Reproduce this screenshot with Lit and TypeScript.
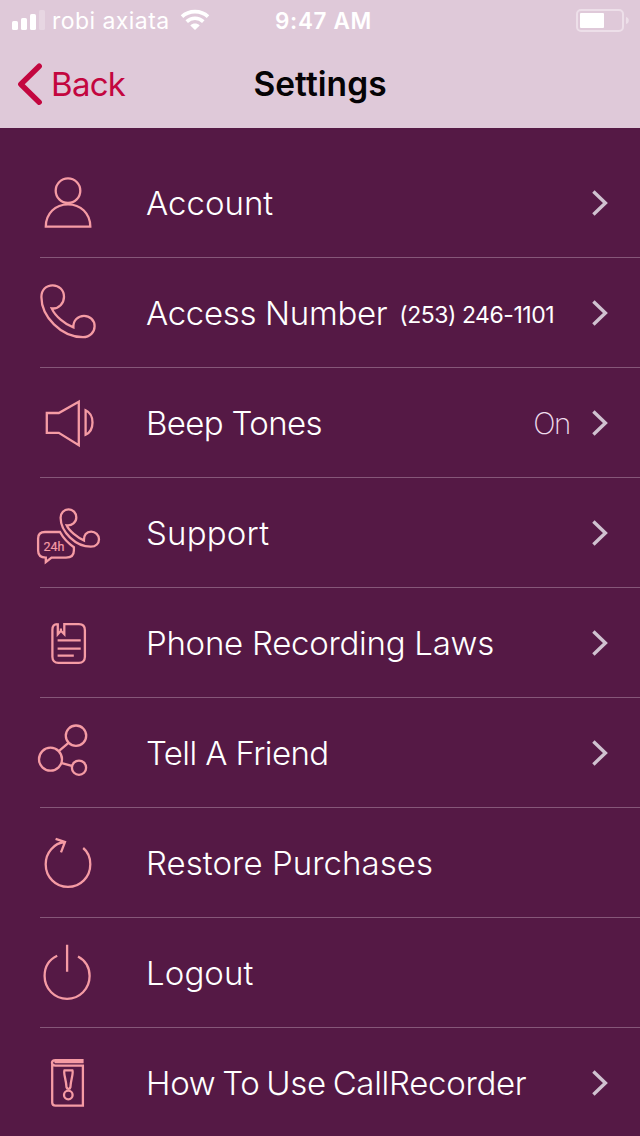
import { LitElement, html, css, svg, nothing } from "lit";
import { customElement, property } from "lit/decorators.js";

const icons: Record<string, unknown> = {
  account: svg`<circle cx="48" cy="30.7" r="12.3"/><path d="M25.8 66.6C25.8 53.5 35.5 44.3 48 44.3S70.3 53.5 70.3 66.6Z"/>`,
  phone: svg`<path d="M31.7 38.4C39 39.2 44 33 44 26.8C44 20 39 15.3 32.7 15.3C26 15.3 21.4 20 21.4 27C21.4 46.5 41 67.2 63 67.2C70 67.2 74.6 62 74.6 56.3C74.6 50 69.5 45.8 64 45.8C58 45.8 53 50.5 53.4 57.4C45 54.5 35 46 31.7 38.4Z"/>`,
  speaker: svg`<path d="M26.8 33H38.8L58.8 21.8V65.3L38.8 52.8H26.8ZM65.6 30.2V54.8C74.8 50.5 74.8 34.5 65.6 30.2Z"/>`,
  support: svg`<path d="M46.7 35.3C52 36 56.3 32.2 56.3 27.6C56.3 22.6 52.8 19.4 48.6 19.4C44 19.4 40.6 22.8 40.6 27.8C40.6 42 56 56.7 70.8 56.7C76 56.7 79 53.3 79 49.3C79 45 75.5 41.6 71.2 41.6C66.5 41.6 63.6 45.2 63.9 50.4C57.5 47.5 49 41 46.7 35.3Z"/><path d="M40 42H25C20.5 42 18.1 44.5 18.1 48.5V60.5C18.1 65 20.8 67.6 25.8 67.6V72.2L31.5 67.6H46C51 67.6 53.9 65 53.9 60.5V57.2C48.5 53.5 43.5 48.5 40 42Z"/><text class="hours" x="23.5" y="60.8" textLength="21" lengthAdjust="spacingAndGlyphs">24h</text>`,
  laws: svg`<path d="M37.3 24.2C34.2 24.2 32.4 26.4 32.4 29.8V56.8C32.4 60.5 34.7 62.9 38.3 62.9H58.9C62.5 62.9 64.9 60.5 64.9 56.8V30.2C64.9 26.4 62.5 24.2 58.9 24.2H44.3V34.2L40.9 30.8L37.8 34.2V23.2M40.9 28.6V31.5M37.6 40.3H60.7M37.6 48.7H60.7M37.6 55.6H53.8"/>`,
  share: svg`<circle cx="56" cy="25.7" r="10.2"/><circle cx="30.5" cy="49.2" r="11.5"/><circle cx="59" cy="57.7" r="7.1"/><path d="M48.5 32.8L38.8 41.2M41.8 53.1L51.8 55.8"/>`,
  restore: svg`<path d="M63.2 28C68 32 70.3 38 70.3 44.2C70.3 57 60.5 66.9 48 66.9S25.7 57 25.7 44.2C25.7 32.5 34 23.2 44.8 22M35.6 18.8L45 22L41 32.3"/>`,
  power: svg`<path d="M37.2 25.8C29 29.7 24.6 37.2 24.6 46C24.6 58.9 34.7 68.8 47.1 68.8S69.6 58.9 69.6 46C69.6 37.6 65.2 30.3 58 26.4M47.1 14.7V41.7"/>`,
  guide: svg`<g transform="translate(0 -4)"><path d="M63.6 28.1H35.5C30.8 28.1 30.8 33.6 35.5 33.6H62.9V73.6H35.5C33.4 73.6 32.2 72.4 32.2 70.5V31M34.5 30H63.6M44.5 38.4H52.4C53.8 41 50.8 47 50.4 55.2C50 57.4 46.9 57.4 46.5 55.2C46.1 47 43.1 41 44.5 38.4Z" transform="translate(0 -4)"/><circle cx="48.3" cy="59" r="4.3"/></g>`,
};

interface Item {
  icon: string;
  label: string;
  key: string;
  number?: string;
  value?: string;
  chevron: boolean;
}

const items: Item[] = [
  { icon: "account", label: "Account", key: "account", chevron: true },
  { icon: "phone", label: "Access Number", key: "access", number: "(253) 246-1101", chevron: true },
  { icon: "speaker", label: "Beep Tones", key: "beep", value: "On", chevron: true },
  { icon: "support", label: "Support", key: "support", chevron: true },
  { icon: "laws", label: "Phone Recording Laws", key: "laws", chevron: true },
  { icon: "share", label: "Tell A Friend", key: "tell", chevron: true },
  { icon: "restore", label: "Restore Purchases", key: "restore", chevron: false },
  { icon: "power", label: "Logout", key: "logout", chevron: false },
  { icon: "guide", label: "How To Use CallRecorder", key: "guide", chevron: true },
];

@customElement("settings-row")
export class SettingsRow extends LitElement {
  @property({ attribute: false }) item!: Item;

  static styles = css`
    :host { display: block; height: 110px; flex: none; }
    .row { display: flex; align-items: center; height: 110px; padding-left: 20px; box-sizing: border-box;
      background: linear-gradient(#865779, #865779) 40px 109px / 600px 1px no-repeat; }
    .icon { flex: none; width: 100px; height: 110px; fill: none; stroke: #f59ba4; stroke-width: 2.3; }
    .hours { font: 13.5px Roboto, sans-serif; fill: #f59ba4; stroke: #f59ba4; stroke-width: 0.2; }
    .label { margin-left: 26px; font-size: 33px; font-weight: 300; line-height: 40px; color: #fff; white-space: nowrap; letter-spacing: 0; }
    .access { letter-spacing: -0.33px; }
    .beep { letter-spacing: -0.65px; }
    .support { letter-spacing: 0.2px; }
    .laws { letter-spacing: -0.27px; }
    .tell { letter-spacing: -0.6px; }
    .restore { letter-spacing: 0.05px; }
    .logout { letter-spacing: 0.1px; }
    .guide { letter-spacing: -0.3px; word-spacing: -2.2px; }
    .number { margin-left: 12px; padding-top: 3px; font-size: 23px; line-height: 30px; color: #fff; white-space: nowrap; letter-spacing: -0.47px; }
    .spacer { flex: 1; }
    .value { font-size: 29.5px; font-weight: 200; line-height: 40px; color: #efdced; margin-right: 21px; letter-spacing: -1.4px; }
    .chevron { flex: none; width: 18px; height: 28px; margin-right: 31px; fill: none; stroke: #d0c2d0; stroke-width: 3.4; }
  `;

  render() {
    const i = this.item;
    return html`<div class="row">
      <svg class="icon" viewBox="0 -12 100 110">${icons[i.icon]}</svg>
      <span class="label ${i.key}">${i.label}</span>
      ${i.number ? html`<span class="number">${i.number}</span>` : nothing}
      <span class="spacer"></span>
      ${i.value ? html`<span class="value">${i.value}</span>` : nothing}
      ${i.chevron ? html`<svg class="chevron" viewBox="0 0 18 28"><path d="M2.4 2.6L14.4 14L2.4 25.4"/></svg>` : nothing}
    </div>`;
  }
}

@customElement("app-root")
export class AppRoot extends LitElement {
  static styles = css`
    :host { display: block; height: 1136px; overflow: hidden; background: #551945; font-family: Inter, "Liberation Sans", sans-serif; }
    .header { height: 128px; background: #dfc9d9; }
    .status { display: grid; grid-template-columns: 1fr auto 1fr; align-items: center; height: 40px; color: #fff; }
    .carrier { display: flex; align-items: center; padding-left: 11px; }
    .signal { width: 34px; height: 22px; margin-right: 7px; fill: #fff; }
    .name { font-size: 23px; line-height: 38px; padding-top: 2px; letter-spacing: 0.45px; }
    .wifi { width: 30px; height: 22px; margin-left: 10px; }
    .time { font-size: 22.5px; font-weight: 600; letter-spacing: 0.65px; padding-left: 7px; }
    .battery { justify-self: end; width: 54px; height: 24px; margin-right: 10px; }
    .nav { display: grid; grid-template-columns: 1fr auto 1fr; align-items: center; height: 88px; }
    .back { display: flex; align-items: center; padding-left: 16px; font-size: 33px; color: #c3063f; letter-spacing: -0.7px; }
    .arrow { width: 27px; height: 44px; margin-right: 8px; fill: none; stroke: #c3063f; stroke-width: 5.4; stroke-linecap: round; stroke-linejoin: round; }
    .title { font-size: 33.5px; font-weight: 600; color: #050305; letter-spacing: 0.05px; }
    .list { display: flex; flex-direction: column; padding-top: 20px; }
  `;

  render() {
    return html`
      <div class="header">
        <div class="status">
          <div class="carrier">
            <svg class="signal" viewBox="0 0 34 22"><rect x="1" y="12" width="6" height="9" rx="1.6"/><rect x="10" y="9" width="6" height="12" rx="1.6"/><rect x="19" y="5" width="6" height="16" rx="1.6"/><rect x="28" y="1" width="6" height="20" rx="1.6" opacity=".25"/></svg>
            <span class="name">robi axiata</span>
            <svg class="wifi" viewBox="0 0 30 22" fill="none" stroke="#fff" stroke-width="3.6"><path d="M2 7.6C9 .9 21 .9 28 7.6M6.7 12.6C11.3 8.2 18.7 8.2 23.3 12.6"/><path d="M10.3 16.4C13 14 17 14 19.7 16.4L15 21Z" fill="#fff" stroke="none"/></svg>
          </div>
          <span class="time">9:47 AM</span>
          <svg class="battery" viewBox="0 0 54 24"><rect x="1" y="2" width="46" height="21" rx="4" fill="none" stroke="#eddfe9" stroke-width="2"/><rect x="4" y="5" width="24" height="15" rx="1" fill="#fff"/><path d="M50 9C53.7 9.5 53.7 15.5 50 16Z" fill="#eddfe9"/></svg>
        </div>
        <div class="nav">
          <div class="back"><svg class="arrow" viewBox="0 0 27 44"><path d="M23.2 4.2L4.8 22.2L23.2 40.2"/></svg><span>Back</span></div>
          <span class="title">Settings</span>
        </div>
      </div>
      <div class="list">${items.map((i) => html`<settings-row .item=${i}></settings-row>`)}</div>
    `;
  }
}
